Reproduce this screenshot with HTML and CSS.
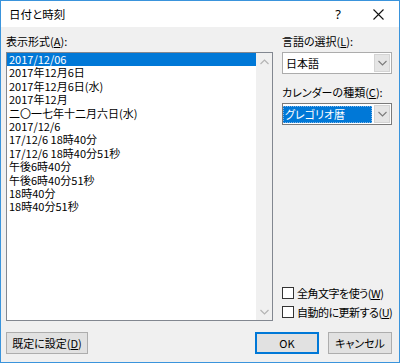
FILE: index.html
```html
<!DOCTYPE html>
<html lang="ja">
<head>
    <meta charset="UTF-8">
    <title>日付と時刻</title>
    <link rel="stylesheet" href="styles.css">
</head>
<body>
    <div class="dialog">
        <div class="titlebar">
            <span class="title">日付と時刻</span>
            <span class="tb-btn help">?</span>
            <span class="tb-btn close">
                <svg width="11" height="11" viewBox="0 0 11 11"><path d="M0.5 0.5 L10.5 10.5 M10.5 0.5 L0.5 10.5" stroke="#111" stroke-width="1.1" fill="none"/></svg>
            </span>
        </div>

        <div class="dialog-body">
            <div class="main">
                <div class="left">
                    <div class="label">表示形式(<u>A</u>):</div>
                    <div class="listbox">
                        <ul class="items">
                            <li class="item selected">2017/12/06</li>
                            <li class="item">2017年12月6日</li>
                            <li class="item">2017年12月6日(水)</li>
                            <li class="item">2017年12月</li>
                            <li class="item">二〇一七年十二月六日(水)</li>
                            <li class="item">2017/12/6</li>
                            <li class="item">17/12/6 18時40分</li>
                            <li class="item">17/12/6 18時40分51秒</li>
                            <li class="item">午後6時40分</li>
                            <li class="item">午後6時40分51秒</li>
                            <li class="item">18時40分</li>
                            <li class="item">18時40分51秒</li>
                        </ul>
                        <div class="scrollbar">
                            <span class="arrow">
                                <svg width="9" height="6" viewBox="0 0 9 6"><path d="M0.5 5 L4.5 1 L8.5 5" stroke="#b4b4b4" stroke-width="1.2" fill="none"/></svg>
                            </span>
                            <span class="arrow">
                                <svg width="9" height="6" viewBox="0 0 9 6"><path d="M0.5 1 L4.5 5 L8.5 1" stroke="#b4b4b4" stroke-width="1.2" fill="none"/></svg>
                            </span>
                        </div>
                    </div>
                </div>

                <div class="right">
                    <div class="label">言語の選択(<u>L</u>):</div>
                    <div class="combo">
                        <span class="combo-text">日本語</span>
                        <span class="combo-btn">
                            <svg width="9" height="6" viewBox="0 0 9 6"><path d="M0.5 1 L4.5 5 L8.5 1" stroke="#7a7a7a" stroke-width="1.1" fill="none"/></svg>
                        </span>
                    </div>

                    <div class="label label-gap">カレンダーの種類(<u>C</u>):</div>
                    <div class="combo focused">
                        <span class="combo-text selected">グレゴリオ暦</span>
                        <span class="combo-btn">
                            <svg width="9" height="6" viewBox="0 0 9 6"><path d="M0.5 1 L4.5 5 L8.5 1" stroke="#7a7a7a" stroke-width="1.1" fill="none"/></svg>
                        </span>
                    </div>

                    <div class="checks">
                        <div class="check"><span class="box"></span><span class="check-text">全角文字を使う(<u>W</u>)</span></div>
                        <div class="check"><span class="box"></span><span class="check-text">自動的に更新する(<u>U</u>)</span></div>
                    </div>
                </div>
            </div>

            <div class="buttons">
                <span class="btn btn-wide"><span>既定に設定(<u>D</u>)</span></span>
                <span class="spacer"></span>
                <span class="btn default">OK</span>
                <span class="btn">キャンセル</span>
            </div>
        </div>
    </div>
</body>
</html>
```

FILE: styles.css
```css
/* Date & time dialog */
body {
    margin: 0;
    background: #fff;
}
.dialog {
    width: 400px;
    height: 363px;
    box-sizing: border-box;
    border: 1px solid #3a94dc;
    background: #f0f0f0;
    font-family: "Noto Sans CJK JP", sans-serif;
    font-size: 11px;
    font-feature-settings: "palt";
    color: #000;
    display: flex;
    flex-direction: column;
}
.titlebar {
    height: 26px;
    flex-shrink: 0;
    background: #fff;
    display: flex;
    align-items: center;
    padding: 0 1px 0 8px;
}
.title {
    flex: 1;
    font-size: 11.5px;
    line-height: 14px;
}
.tb-btn {
    width: 40px;
    height: 26px;
    display: flex;
    align-items: center;
    justify-content: center;
}
.help {
    font-family: "Noto Sans", sans-serif;
    font-size: 13px;
}

.dialog-body {
    flex: 1;
    display: flex;
    flex-direction: column;
    padding: 7px 7px 8px 5px;
}
.main {
    display: flex;
    gap: 9px;
}
.left {
    width: 267px;
    flex-shrink: 0;
}
.right {
    flex: 1;
    min-width: 0;
    display: flex;
    flex-direction: column;
}
.label {
    height: 14px;
    line-height: 14px;
    margin-bottom: 4px;
    white-space: nowrap;
}
.label-gap {
    margin-top: 11px;
}

/* list */
.listbox {
    height: 269px;
    box-sizing: border-box;
    border: 1px solid #828790;
    background: #fff;
    display: flex;
}
.items {
    flex: 1;
    list-style: none;
    margin: 0;
    padding: 0;
}
.item {
    height: 13.4px;
    line-height: 13.4px;
    padding-left: 2px;
    white-space: nowrap;
}
.item.selected {
    background: #0078d7;
    color: #fff;
}
.scrollbar {
    width: 16px;
    background: #f0f0f0;
    display: flex;
    flex-direction: column;
    justify-content: space-between;
}
.arrow {
    height: 17px;
    display: flex;
    align-items: center;
    justify-content: center;
}

/* combo boxes */
.combo {
    height: 22px;
    box-sizing: border-box;
    border: 1px solid #acacac;
    background: #fff;
    display: flex;
}
.combo.focused {
    border-color: #7a7a7a;
}
.combo-text {
    flex: 1;
    padding-left: 3px;
    line-height: 20px;
}
.combo-text.selected {
    margin: 2px 1px 1px 0;
    padding-left: 2px;
    line-height: 17px;
    background: #0078d7;
    color: #fff;
    outline: 1px dotted #7fb4e6;
    outline-offset: -1px;
}
.combo-btn {
    width: 14px;
    margin: 1px;
    background: #e5e5e5;
    border: 1px solid #d4d4d4;
    display: flex;
    align-items: center;
    justify-content: center;
}

/* check boxes */
.checks {
    margin-top: auto;
}
.check {
    height: 19px;
    display: flex;
    align-items: center;
    gap: 3px;
    white-space: nowrap;
}
.check-text {
    letter-spacing: -0.5px;
}
.box {
    width: 12px;
    height: 12px;
    flex-shrink: 0;
    box-sizing: border-box;
    border: 1px solid #333;
    background: #fff;
}

/* buttons */
.buttons {
    margin-top: 11px;
    display: flex;
    gap: 9px;
}
.spacer {
    flex: 1;
}
.btn {
    width: 64px;
    height: 22px;
    box-sizing: border-box;
    border: 1px solid #adadad;
    background: #e1e1e1;
    display: flex;
    align-items: center;
    justify-content: center;
    white-space: nowrap;
}
.btn-wide {
    width: 82px;
}
.btn.default {
    border-color: #0078d7;
    box-shadow: inset 0 0 0 1px #0078d7;
}
```
